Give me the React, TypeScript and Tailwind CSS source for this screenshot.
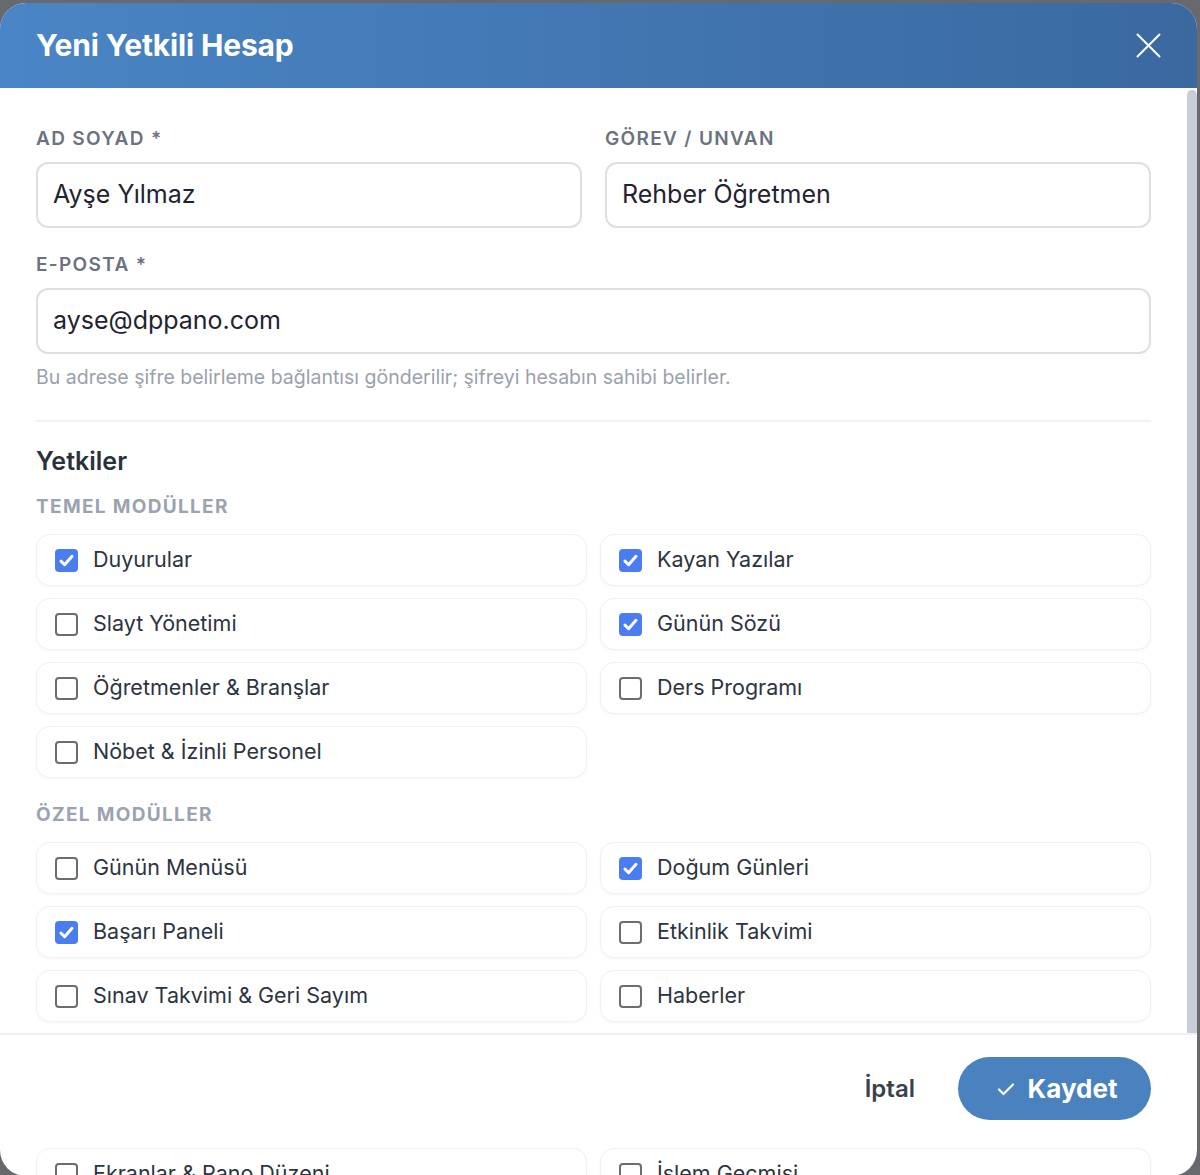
import React from "react";

type Perm = { label: string; checked: boolean };

const temel: Perm[] = [
  { label: "Duyurular", checked: true },
  { label: "Kayan Yazılar", checked: true },
  { label: "Slayt Yönetimi", checked: false },
  { label: "Günün Sözü", checked: true },
  { label: "Öğretmenler & Branşlar", checked: false },
  { label: "Ders Programı", checked: false },
  { label: "Nöbet & İzinli Personel", checked: false },
];

const ozel: Perm[] = [
  { label: "Günün Menüsü", checked: false },
  { label: "Doğum Günleri", checked: true },
  { label: "Başarı Paneli", checked: true },
  { label: "Etkinlik Takvimi", checked: false },
  { label: "Sınav Takvimi & Geri Sayım", checked: false },
  { label: "Haberler", checked: false },
];

const yonetim: Perm[] = [
  { label: "Ekranlar & Pano Düzeni", checked: false },
  { label: "İşlem Geçmişi", checked: false },
];

function Box({ checked }: { checked: boolean }) {
  if (checked) {
    return (
      <span className="flex h-[23px] w-[23px] shrink-0 items-center justify-center rounded-[4px] bg-[#4a7ef0]">
        <svg width="17" height="17" viewBox="0 0 16 16" fill="none">
          <path d="M2.8 8.6l3.4 3.4L13.2 4" stroke="white" strokeWidth="2.8" strokeLinecap="round" strokeLinejoin="round" />
        </svg>
      </span>
    );
  }
  return <span className="h-[23px] w-[23px] shrink-0 rounded-[4px] border-2 border-[#6a6d72] bg-white" />;
}

function PermCard({ p }: { p: Perm }) {
  return (
    <label className="flex h-[52px] items-center gap-[15px] rounded-[14px] border-[1.5px] border-[#f0f1f4] bg-white pl-[18px] shadow-[0_1px_3px_rgba(15,23,42,0.04)]">
      <Box checked={p.checked} />
      <span className="text-[21.5px] leading-none text-[#2d3440]">{p.label}</span>
    </label>
  );
}

function Field({ label, value }: { label: string; value: string }) {
  return (
    <div className="flex flex-col">
      <span className="mb-3 text-[19px] font-semibold leading-[22px] tracking-[0.07em] text-[#6b7280]">{label}</span>
      <div className="flex h-[66px] items-center rounded-[12px] border-2 border-[#dcdfe4] bg-white px-[15px] text-[25px] text-[#1f2430]">
        {value}
      </div>
    </div>
  );
}

function GroupTitle({ children, className }: { children: React.ReactNode; className: string }) {
  return (
    <div className={`text-[19px] font-bold leading-[22px] tracking-[0.07em] text-[#9ca3b0] ${className}`}>{children}</div>
  );
}

export default function App() {
  return (
    <div
      className="h-[1175px] w-[1200px] overflow-hidden bg-[#68696c] pt-[3px]"
      style={{ fontFamily: "Inter, 'Noto Sans', sans-serif" }}
    >
      <div className="h-[1173px] w-[1197px] overflow-hidden rounded-[26px] bg-white">
        {/* header */}
        <div className="flex h-[85px] items-center justify-between bg-gradient-to-r from-[#4a85c5] to-[#3a69a0] pl-9 pr-[36px]">
          <h2 className="text-[30px] font-bold tracking-[-0.005em] text-white">Yeni Yetkili Hesap</h2>
          <svg width="25" height="25" viewBox="0 0 25 25" fill="none">
            <path d="M1.5 1.5l22 22M23.5 1.5l-22 22" stroke="white" strokeWidth="2" strokeLinecap="round" />
          </svg>
        </div>

        {/* scrolling body */}
        <div className="flex h-[945px] overflow-hidden">
          <div className="flex-1 px-9 pt-10">
            <div className="grid grid-cols-2 gap-x-[23px]">
              <Field label="AD SOYAD *" value="Ayşe Yılmaz" />
              <Field label="GÖREV / UNVAN" value="Rehber Öğretmen" />
            </div>
            <div className="mt-[26px]">
              <Field label="E-POSTA *" value="ayse@dppano.com" />
            </div>
            <p className="mt-3 text-[19.5px] leading-[22px] text-[#9aa1ad]">
              Bu adrese şifre belirleme bağlantısı gönderilir; şifreyi hesabın sahibi belirler.
            </p>
            <div className="mt-[32px] h-[2px] bg-[#f1f2f5]" />
            <h3 className="mt-[24px] text-[25px] font-semibold leading-[30px] text-[#2a313c]">Yetkiler</h3>
            <GroupTitle className="mt-[20px]">TEMEL MODÜLLER</GroupTitle>
            <div className="mt-4 grid grid-cols-2 gap-x-[13px] gap-y-3">
              {temel.map((p) => (
                <PermCard key={p.label} p={p} />
              ))}
            </div>
            <GroupTitle className="mt-[26px]">ÖZEL MODÜLLER</GroupTitle>
            <div className="mt-4 grid grid-cols-2 gap-x-[13px] gap-y-3">
              {ozel.map((p) => (
                <PermCard key={p.label} p={p} />
              ))}
            </div>
          </div>
          {/* scrollbar */}
          <div className="w-[10px] pt-[2px]">
            <div className="h-[950px] w-[10px] rounded-full bg-[#c9cdd7]" />
          </div>
        </div>

        {/* footer */}
        <div className="flex items-center justify-end gap-[43px] border-t-2 border-[#eef0f3] pb-[22px] pl-9 pr-[46px] pt-[22px]">
          <button className="text-[24px] font-semibold text-[#3a414d]">İptal</button>
          <button className="flex h-[63px] w-[193px] items-center justify-center gap-[12px] rounded-full bg-[#4a82c0] pl-[4px] text-[26px] font-bold text-white">
            <svg width="20" height="20" viewBox="0 0 20 20" fill="none">
              <path d="M3 10.5l4.5 4.5L17 5.5" stroke="white" strokeWidth="2.2" strokeLinecap="round" strokeLinejoin="round" />
            </svg>
            Kaydet
          </button>
        </div>

        {/* remaining permissions */}
        <div className="mt-[6px] grid grid-cols-2 gap-x-[13px] pl-9 pr-[46px]">
          {yonetim.map((p) => (
            <PermCard key={p.label} p={p} />
          ))}
        </div>
      </div>
    </div>
  );
}
